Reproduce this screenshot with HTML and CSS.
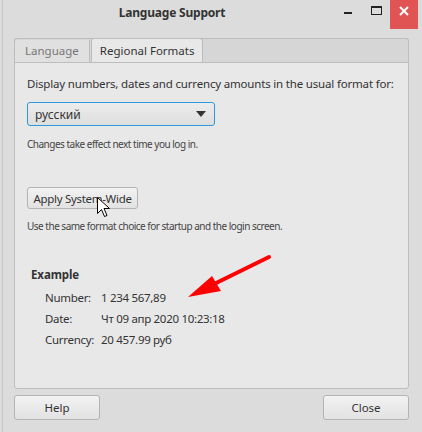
FILE: index.html
```html
<!DOCTYPE html>
<html lang="en">
  <head>
    <meta charset="UTF-8" />
    <title>Language Support</title>
    <link rel="stylesheet" href="styles.css">
  </head>
  <body>
    <div class="window">
      <!-- title bar -->
      <div class="titlebar">
        <div class="title">Language Support</div>
        <div class="controls">
          <div class="ctl"><span class="min"></span></div>
          <div class="ctl"><span class="max"></span></div>
          <div class="ctl close">
            <svg width="10" height="10" viewBox="0 0 10 10">
              <path d="M1 1 L9 9 M9 1 L1 9" stroke="#fff" stroke-width="2"/>
            </svg>
          </div>
        </div>
      </div>

      <!-- tabs -->
      <div class="tabbar">
        <div class="tab">Language</div>
        <div class="tab active">Regional Formats</div>
      </div>

      <div class="pane">
        <p class="lead">Display numbers, dates and currency amounts in the usual format for:</p>
        <div class="combo">
          <span>русский</span>
          <span class="caret"></span>
        </div>
        <p class="note first">Changes take effect next time you log in.</p>

        <button class="btn apply">Apply System-Wide</button>
        <p class="note">Use the same format choice for startup and the login screen.</p>

        <div class="example">
          <h3>Example</h3>
          <div class="rows">
            <span>Number:</span><span>1 234 567,89</span>
            <span>Date:</span><span>Чт 09 апр 2020 10:23:18</span>
            <span>Currency:</span><span>20 457.99 руб</span>
          </div>
        </div>
      </div>

      <div class="footer">
        <button class="btn big">Help</button>
        <button class="btn big">Close</button>
      </div>

      <!-- pointer and red arrow drawn over the window -->
      <svg class="overlay" width="422" height="432" viewBox="0 0 422 432">
        <line x1="269" y1="257" x2="208" y2="287" stroke="#f00" stroke-width="4" stroke-linecap="round"/>
        <polygon points="188,297 212,276 221,291" fill="#f00"/>
        <path d="M97.5 197.5 L97.5 213.5 L101.5 209.5 L104.5 216.5 L107 215.5 L104 208.5 L109.5 208.5 Z" fill="#fff" stroke="#000" stroke-width="1"/>
      </svg>
    </div>
  </body>
</html>
```

FILE: styles.css
```css
/* base */
body {
  margin: 0;
  background-color: #dcdcdc;
  font-family: "Noto Sans", "Open Sans", sans-serif;
  color: #333;
}

.window {
  position: relative;
  width: 420px;
  height: 432px;
  box-sizing: border-box;
  border-left: 1px solid #c6c6c6;
  margin-left: 2px;
  padding: 0 13px 0 11px;
  display: flex;
  flex-direction: column;
}

/* title bar */
.titlebar {
  display: flex;
  height: 29px;
  margin: 0 -13px 0 -14px;
}

.title {
  flex: 1;
  text-align: center;
  font-weight: bold;
  font-size: 12px;
  letter-spacing: -0.2px;
  line-height: 25px;
  padding-left: 10px;
}

.controls {
  display: flex;
  margin-right: 4px;
}

.ctl {
  width: 28px;
  display: flex;
  justify-content: center;
  align-items: flex-start;
}

.min {
  width: 8px;
  height: 2px;
  background-color: #222;
  margin-top: 12px;
}

.max {
  width: 9px;
  height: 6px;
  border: 1px solid #222;
  border-top-width: 2px;
  margin-top: 6px;
}

.close {
  background-color: #e05454;
}

.close svg {
  margin-top: 6px;
}

/* tabs */
.tabbar {
  display: flex;
  height: 23px;
  margin-top: 9px;
  background-color: #d6d6d6;
  border: 1px solid #bdbdbd;
  border-bottom: none;
  border-radius: 3px 3px 0 0;
  font-size: 11.5px;
}

.tab {
  padding: 0 10px 0 10px;
  margin-top: 1px;
  line-height: 21px;
  background-color: #e0e0e0;
  color: #777;
  border-right: 1px solid #bdbdbd;
  border-radius: 3px 0 0 0;
}

.tab.active {
  margin-top: -1px;
  margin-left: 1px;
  margin-bottom: -1px;
  padding: 0 8px;
  line-height: 24px;
  background-color: #e8e8e8;
  color: #333;
  border-left: 1px solid #bdbdbd;
  border-top: 1px solid #bdbdbd;
  border-radius: 3px 3px 0 0;
}

/* content */
.pane {
  height: 327px;
  box-sizing: border-box;
  background-color: #e8e8e8;
  border: 1px solid #bdbdbd;
  border-radius: 0 0 3px 3px;
  padding: 12px 12px;
}

p {
  margin: 0;
}

.lead {
  font-size: 11.5px;
  letter-spacing: -0.18px;
  line-height: 18px;
  white-space: nowrap;
}

.combo {
  width: 188px;
  height: 24px;
  box-sizing: border-box;
  margin-top: 9px;
  padding: 0 8px 0 7px;
  border: 1px solid #2d9ade;
  border-radius: 3px;
  background: linear-gradient(to bottom, #ececec, #dedede);
  display: flex;
  align-items: center;
  justify-content: space-between;
  font-size: 12px;
}

.caret {
  width: 0;
  height: 0;
  border-left: 5px solid transparent;
  border-right: 5px solid transparent;
  border-top: 6px solid #333;
}

.note {
  font-size: 10px;
  line-height: 14px;
  color: #444;
  letter-spacing: -0.5px;
  white-space: nowrap;
}

.note.first {
  margin-top: 11px;
}

.btn {
  font-family: inherit;
  color: #333;
  background: linear-gradient(to bottom, #f2f2f2, #e2e2e2);
  border: 1px solid #b4b4b4;
  border-radius: 3px;
  padding: 0;
  white-space: nowrap;
}

.apply {
  display: block;
  width: 111px;
  height: 22px;
  margin-top: 36px;
  margin-bottom: 10px;
  font-size: 11.5px;
  letter-spacing: -0.3px;
}

/* example block */
.example {
  margin-top: 33px;
  padding-left: 4px;
}

.example h3 {
  margin: 0;
  font-size: 11.5px;
  letter-spacing: -0.1px;
  line-height: 18px;
}

.rows {
  display: grid;
  grid-template-columns: max-content max-content;
  column-gap: 7px;
  margin-top: 3px;
  padding-left: 14px;
  font-size: 11.5px;
  letter-spacing: -0.3px;
  line-height: 21px;
}

/* bottom buttons */
.footer {
  display: flex;
  justify-content: space-between;
  margin-top: 6px;
}

.big {
  width: 86px;
  height: 25px;
  font-size: 11.5px;
}

.overlay {
  position: absolute;
  top: 0;
  left: -3px;
  pointer-events: none;
}
```
